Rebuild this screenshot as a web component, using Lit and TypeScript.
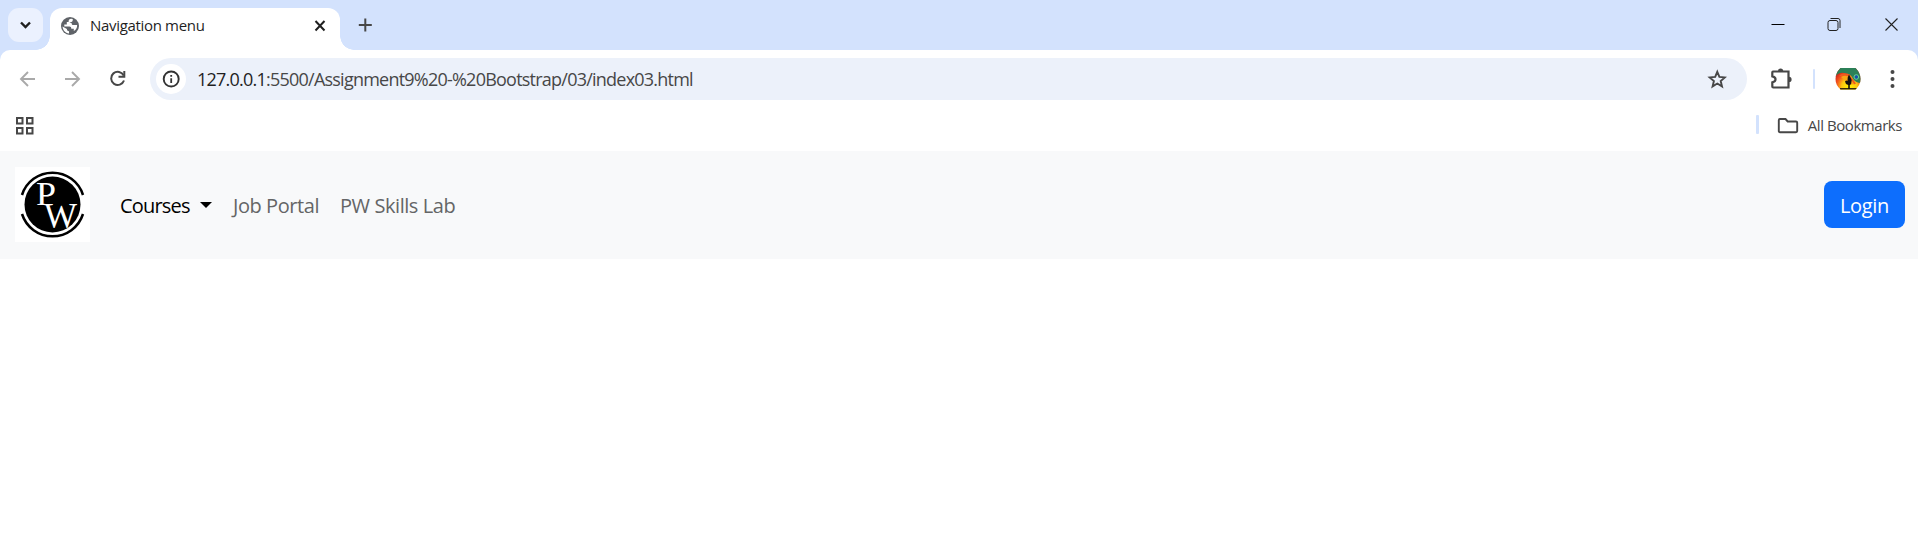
import { LitElement, html, css } from "lit";
import { customElement } from "lit/decorators.js";

@customElement("browser-tabs")
class BrowserTabs extends LitElement {
  static styles = css`
    :host { display: flex; height: 50px; background: #d3e2fd; font-family: "Segoe UI", "Open Sans", "Noto Sans", sans-serif; color: #1f1f1f; }
    svg { display: block; flex: none; }
    .search { width: 35px; height: 34px; margin: 8px 7px 0 8px; border-radius: 11px; background: #ebf1fe; }
    .tab { position: relative; box-sizing: border-box; width: 290px; height: 42px; margin-top: 8px; padding: 0 12px 7px 10px; border-radius: 12px 12px 0 0; background: #fff; display: flex; align-items: center; }
    .tab::before, .tab::after { content: ""; position: absolute; bottom: 0; width: 14px; height: 14px; }
    .tab::before { left: -14px; background: radial-gradient(circle at 0 0, transparent 13.5px, #fff 14px); }
    .tab::after { right: -14px; background: radial-gradient(circle at 100% 0, transparent 13.5px, #fff 14px); }
    .title { flex: 1; margin-left: 10px; padding-bottom: 2px; font-size: 15px; letter-spacing: -0.32px; white-space: nowrap; }
    .plus { margin: 15px 0 0 15px; }
    .win { margin-left: auto; display: flex; padding: 14px 18.500px 0 0; gap: 36px; }
  `;
  render() {
    return html`
      <div class="search"><svg width="35" height="34" viewBox="0 0 35 34"><path d="M13 14.500l4.500 4.500 4.500-4.500" fill="none" stroke="#1f1f1f" stroke-width="2.400"/></svg></div>
      <div class="tab">
        <svg width="20" height="20" viewBox="0 0 20 20"><circle cx="10" cy="10" r="9" fill="#5f6368"/><path d="M11.2 2.800c-2 .2-2.800 1.500-2.600 3.200H6.800v2.400H4.300v2.200h5c1.500 0 2 .9 2 2.200h2.500v2.300c2.300-1.200 3.500-3.300 3.300-6h-3.500c-1.700 0-2-1-2-2.200H9.500c1.800-.6 3.800-1.200 3.200-3.800zM2.500 10.500c.3 3.700 2.800 6.500 6.500 7v-2.300c-1.500 0-2.100-.8-2.100-2.200z" fill="#fff"/></svg>
        <span class="title">Navigation menu</span>
        <svg width="16" height="16" viewBox="0 0 16 16"><path d="M3.500 3l9 9.500m0-9.500l-9 9.500" stroke="#1f1f1f" stroke-width="2"/></svg>
      </div>
      <svg class="plus" width="20" height="20" viewBox="0 0 20 20"><path d="M10.300 3.500v13M3.800 10h13" stroke="#474747" stroke-width="2"/></svg>
      <div class="win">
        <svg width="20" height="20" viewBox="0 0 20 20"><path d="M3.500 10.500h13" stroke="#000"/></svg>
        <svg width="20" height="20" viewBox="0 0 20 20"><rect x="4" y="6.500" width="10" height="10" rx="2" fill="none" stroke="#222"/><path d="M6.500 4.500H14q2 0 2 2v7.500" fill="none" stroke="#222"/></svg>
        <svg width="20" height="20" viewBox="0 0 20 20"><path d="M5.500 4.500l12 12m0-12l-12 12" stroke="#222" stroke-width="1.100"/></svg>
      </div>`;
  }
}

@customElement("browser-toolbar")
class BrowserToolbar extends LitElement {
  static styles = css`
    :host { display: block; background: #d3e2fd; font-family: "Segoe UI", "Open Sans", "Noto Sans", sans-serif; }
    .panel { background: #fff; border-radius: 10px 10px 0 0; height: 101px; }
    svg { display: block; flex: none; }
    .row { display: flex; align-items: center; height: 42px; padding-top: 8px; }
    .nav { display: flex; gap: 25px; width: 132px; padding-left: 18px; }
    .box { display: flex; align-items: center; box-sizing: border-box; width: 1597px; height: 42px; padding: 0 20px 0 6px; border-radius: 21px; background: #ecf1fa; }
    .info { width: 30px; height: 30px; border-radius: 50%; background: #fff; }
    .url { flex: 1; margin-left: 11px; font-size: 18px; letter-spacing: -0.770px; color: #474747; white-space: nowrap; }
    .url b { font-weight: 400; color: #1f1f1f; }
    .ext { margin-left: 21px; }
    .sep { width: 2px; height: 20px; margin: 0 20px 0 19px; background: #d3e2fd; border-radius: 1px; }
    .dots { margin-left: 22px; }
    .marks { display: flex; align-items: center; height: 49px; padding: 0 16px 2px 14px; }
    .marks .bar { width: 3px; height: 19px; margin-left: auto; margin-right: 18px; background: #d3e2fd; border-radius: 1px; }
    .all { margin-left: 9px; font-size: 15px; letter-spacing: -0.440px; color: #474747; white-space: nowrap; }
  `;
  render() {
    return html`<div class="panel">
      <div class="row">
        <div class="nav">
          <svg width="20" height="20" viewBox="0 0 20 20"><path d="M17 10H3.500M10 3L3 10l7 7" fill="none" stroke="#a9a9a9" stroke-width="1.900"/></svg>
          <svg width="20" height="20" viewBox="0 0 20 20"><path d="M2 10h13.500M9 3l7 7-7 7" fill="none" stroke="#a9a9a9" stroke-width="1.900"/></svg>
          <svg width="20" height="20" viewBox="0 0 20 20"><path d="M15.700 6.500A6.600 6.600 0 1 0 16 11.500" fill="none" stroke="#474747" stroke-width="2"/><path d="M16.300 2v5.800h-5.800" fill="none" stroke="#474747" stroke-width="2"/></svg>
        </div>
        <div class="box">
          <div class="info"><svg width="30" height="30" viewBox="0 0 30 30"><circle cx="15.200" cy="15" r="7.500" fill="none" stroke="#333" stroke-width="1.900"/><path d="M15.200 14.300v4.700M15.200 11v1.800" stroke="#333" stroke-width="1.800"/></svg></div>
          <span class="url"><b>127.0.0.1</b>:5500/Assignment9%20-%20Bootstrap/03/index03.html</span>
          <svg width="20" height="20" viewBox="0 0 20 20"><path d="M10.300 2.800l2.100 5.100 5.500.5-4.200 3.600 1.300 5.400-4.700-2.900-4.700 2.900 1.300-5.400-4.200-3.600 5.500-.5z" fill="none" stroke="#474747" stroke-width="1.900"/></svg>
        </div>
        <svg class="ext" width="26" height="24" viewBox="0 0 26 24"><path d="M5 4.500h15.500v16H5.300q-1 0-1-1v-4.200c4.300-.8 4.300-5.200 0-6V5.500q0-1 .7-1z" fill="none" stroke="#474747" stroke-width="2.200"/><path d="M10 4a2.600 2.600 0 0 1 5.200 0zM21 9.800a2.600 2.600 0 0 1 0 5.200z" fill="#474747"/></svg>
        <span class="sep"></span>
        <svg width="26" height="26" viewBox="0 0 26 26">
          <defs><clipPath id="c"><path d="M5.500 2h15q5 5 5 11t-5 10.500h-15Q.5 19 .5 13t5-11z"/></clipPath><radialGradient id="g" cx=".55" cy=".8" r=".65"><stop offset="0" stop-color="#fff200"/><stop offset=".45" stop-color="#fbc810"/><stop offset=".75" stop-color="#f4571d"/><stop offset="1" stop-color="#d5281b"/></radialGradient></defs>
          <g clip-path="url(#c)"><rect width="26" height="26" fill="url(#g)"/><path d="M0 11Q4 6 9 7q7 0 9 6 3 4 8 4V0H0z" fill="#2b8058"/><path d="M4 9.500q5-4 10 0 4 3 7 8l-2 1-6-6z" fill="#ef5a20"/><path d="M6 11q5-3 9 1l4 6-4 1z" fill="#f8a515"/><circle cx="21.300" cy="11" r="2.300" fill="#174fac" stroke="#65d894"/><path d="M5 22h17v2H5z" fill="#342b08"/><path d="M14 8.500l1.300 2.500 1.400 3-.6 4-1.300 1V23h-1.600v-4l-2.200-1-1-2.500 1.200-1 1.300.5.200-3.500z" fill="#111"/></g>
        </svg>
        <svg class="dots" width="20" height="20" viewBox="0 0 20 20" fill="#474747"><circle cx="9.500" cy="3" r="2"/><circle cx="9.500" cy="10" r="2"/><circle cx="9.500" cy="17" r="2"/></svg>
      </div>
      <div class="marks">
        <svg width="20" height="20" viewBox="0 0 20 20" fill="none" stroke="#474747" stroke-width="2"><path d="M3 3h5.500v5.500H3zM13 3h5.500v5.500H13zM3 13h5.500v5.500H3zM13 13h5.500v5.500H13z"/></svg>
        <span class="bar"></span>
        <svg width="22" height="20" viewBox="0 0 22 20"><path d="M3 4h5.500l2.200 2.500H19q1.200 0 1.200 1.200V16q0 1.200-1.200 1.200H3q-1.200 0-1.200-1.200V5.200Q1.800 4 3 4z" fill="none" stroke="#474747" stroke-width="1.900"/></svg>
        <span class="all">All Bookmarks</span>
      </div>
    </div>`;
  }
}

@customElement("site-navbar")
class SiteNavbar extends LitElement {
  static styles = css`
    :host { display: flex; align-items: center; box-sizing: border-box; height: 108px; padding: 0 13px 0 15px; background: #f8f9fa; font-family: "Segoe UI", "Open Sans", "Noto Sans", sans-serif; font-size: 20px; color: #646566; white-space: nowrap; }
    .logo { display: block; width: 75px; height: 75px; margin: 0 30px 1px 0; background: #fff; }
    .logo text { font-family: "Liberation Serif", serif; fill: #fff; }
    a { letter-spacing: -0.430px; }
    .courses { display: flex; align-items: center; width: 113px; color: #000; letter-spacing: -0.800px; }
    .caret { width: 0; margin-left: auto; margin-right: 21px; border: 6px solid transparent; border-top-color: #000; border-bottom: 0; }
    .portal { width: 107px; }
    .login { margin: 0 0 2px auto; box-sizing: border-box; width: 81px; height: 47px; border: 0; border-radius: 8px; background: #0d6efd; color: #fff; font: inherit; letter-spacing: -0.300px; padding: 2px 0 0; }
  `;
  render() {
    return html`
      <svg class="logo" viewBox="0 0 75 75"><circle cx="37.500" cy="37.500" r="28" fill="#000"/><path d="M7 28a32 32 0 0 1 61 0M7 47a32 32 0 0 0 61 0" fill="none" stroke="#000" stroke-width="2.500"/><text x="21" y="38" font-size="34" textLength="20" lengthAdjust="spacingAndGlyphs">P</text><text x="29" y="61" font-size="36" textLength="33" lengthAdjust="spacingAndGlyphs">W</text></svg>
      <a class="courses">Courses<span class="caret"></span></a>
      <a class="portal">Job Portal</a>
      <a>PW Skills Lab</a>
      <button class="login">Login</button>`;
  }
}

@customElement("app-root")
class AppRoot extends LitElement {
  static styles = css`:host { display: block; height: 552px; background: #fff; overflow: hidden; }`;
  render() {
    return html`<browser-tabs></browser-tabs><browser-toolbar></browser-toolbar><site-navbar></site-navbar>`;
  }
}
